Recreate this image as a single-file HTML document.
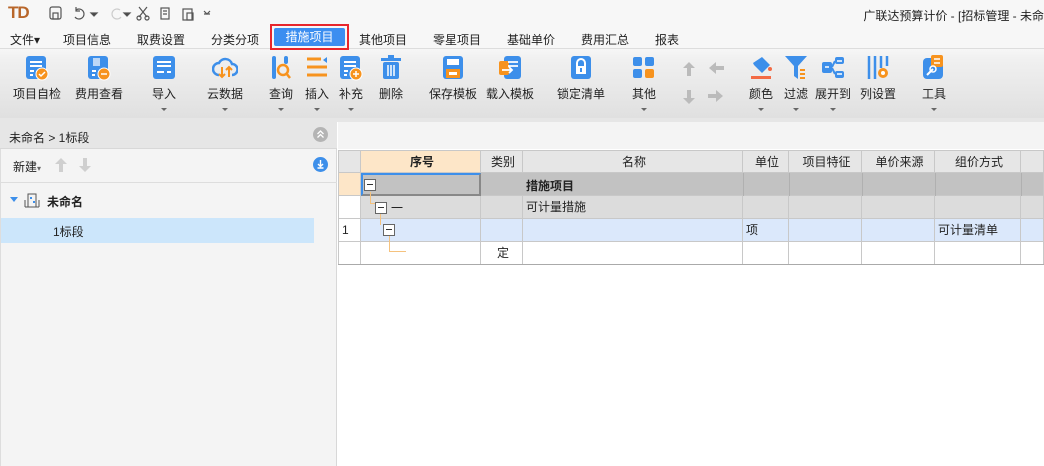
<!DOCTYPE html>
<html><head><meta charset="utf-8"><style>
*{margin:0;padding:0;box-sizing:border-box}
body{width:1044px;height:466px;overflow:hidden;position:relative;background:#fff;font-family:"Liberation Sans","Noto Sans CJK SC",sans-serif;font-size:12px;color:#222}
.a{position:absolute;white-space:nowrap}
.tb{position:absolute;top:0;width:1044px;height:118px;background:linear-gradient(#f7f7f7 0,#f7f7f7 48px,#f0f0f0 60px,#e0e0e0 118px)}
.menu span{position:absolute;top:31px;font-size:12px}
.it{position:absolute;top:55px;width:64px;text-align:center;font-size:12px;white-space:nowrap}
.it svg{display:block;margin:0 auto 4px}
.car{display:block;margin:6px auto 0;width:0;height:0;border-left:3px solid transparent;border-right:3px solid transparent;border-top:3px solid #666}
.g{position:absolute;left:338px;top:150px;width:706px}
.c{position:absolute;border-right:1px solid #c8c8c8;border-bottom:1px solid #c8c8c8;height:23px;line-height:22px;font-size:12px;padding-left:3px;white-space:nowrap}
.box{position:absolute;width:12px;height:12px;border:1px solid #666;background:#fff}
.box:after{content:"";position:absolute;left:2px;top:4px;width:6px;height:1px;background:#333}
</style></head><body>
<div class="tb"></div>
<div class="a" style="left:8px;top:3px;font:bold 17px 'Liberation Sans';color:#b8662a;letter-spacing:-1px">TD</div>
<svg class="a" style="left:48px;top:5px" width="170" height="16" fill="none" stroke="#555" stroke-width="1.2">
<rect x="2" y="2" width="11" height="12" rx="2"/><rect x="5" y="8" width="5" height="6"/>
<path d="M28 5a5 5 0 1 1-1 7M28 2v4h4"/><path d="M43 8l3 3 3-3z" fill="#444"/>
<path d="M72 5a5 5 0 1 0 1 7" stroke="#ccc"/><path d="M76 8l3 3 3-3z" fill="#444"/>
<path d="M91 2l8 10M99 2l-8 10"/><circle cx="91" cy="13" r="2"/><circle cx="99" cy="13" r="2"/>
<rect x="113" y="3" width="8" height="11"/><path d="M115 6h4M115 9h4"/>
<rect x="135" y="4" width="9" height="11"/><rect x="139" y="8" width="6" height="7"/>
<path d="M156 6l3 3 3-3M156 9h6"/>
</svg>
<div class="a" style="right:0;top:7px;font-size:12px">广联达预算计价 - [招标管理 - 未命</div>
<div class="menu">
<span style="left:10px">文件▾</span><span style="left:63px">项目信息</span><span style="left:137px">取费设置</span><span style="left:211px">分类分项</span>
<span style="left:359px">其他项目</span><span style="left:433px">零星项目</span><span style="left:507px">基础单价</span><span style="left:581px">费用汇总</span><span style="left:655px">报表</span>
</div>
<div class="a" style="left:0;top:48px;width:1044px;height:1px;background:#ddd"></div>
<div class="a" style="left:270px;top:24px;width:79px;height:26px;border:2px solid #e8262c"></div>
<div class="a" style="left:274px;top:28px;width:71px;height:18px;background:#3c8ef0;border-radius:2px;color:#fff;text-align:center;line-height:18px">措施项目</div>

<div class="it" style="left:5px"><svg width="24" height="26"><rect x="1" y="1" width="20" height="23" rx="3" fill="#3d8fea"/><path d="M5 7h12M5 11h12M5 16h4M5 20h3" stroke="#fff" stroke-width="2"/><circle cx="17" cy="19" r="6" fill="#f7931e" stroke="#fff"/><path d="M14 19l2 2 4-4" stroke="#fff" stroke-width="1.5" fill="none"/></svg>项目自检</div>
<div class="it" style="left:67px"><svg width="24" height="26"><rect x="1" y="1" width="20" height="23" rx="3" fill="#3d8fea"/><rect x="6" y="3" width="7" height="8" fill="#bcd7f7"/><path d="M5 16h4M5 20h3" stroke="#fff" stroke-width="2"/><circle cx="17" cy="19" r="6" fill="#f7931e" stroke="#fff"/><path d="M14 19h6" stroke="#fff" stroke-width="1.5"/></svg>费用查看</div>
<div class="it" style="left:132px"><svg width="24" height="26"><rect x="1" y="1" width="22" height="23" rx="3" fill="#3d8fea"/><path d="M5 7h14M5 11h14M5 17h7M15 17h4" stroke="#fff" stroke-width="2"/></svg>导入<i class="car"></i></div>
<div class="it" style="left:193px"><svg width="26" height="26"><path d="M7 20a6 6 0 0 1 0-12a7 7 0 0 1 13 1a5 5 0 0 1 0 11" fill="none" stroke="#3d8fea" stroke-width="2.5"/><path d="M10 12v10M7 19l3 3 3-3M17 22v-10M14 15l3-3 3 3" stroke="#f7931e" stroke-width="2" fill="none"/></svg>云数据<i class="car"></i></div>
<div class="it" style="left:249px"><svg width="24" height="26"><rect x="3" y="1" width="4" height="23" rx="2" fill="#3d8fea"/><rect x="15" y="1" width="4" height="8" rx="2" fill="#3d8fea"/><circle cx="14" cy="15" r="5" fill="none" stroke="#f7931e" stroke-width="2.5"/><path d="M17 18l4 5" stroke="#f7931e" stroke-width="2.5"/></svg>查询<i class="car"></i></div>
<div class="it" style="left:285px"><svg width="24" height="26"><path d="M2 4h14M2 12h20M2 20h20" stroke="#f7931e" stroke-width="3"/><path d="M22 2v6l-4-3z" fill="#3d8fea"/></svg>插入<i class="car"></i></div>
<div class="it" style="left:319px"><svg width="24" height="26"><rect x="1" y="1" width="20" height="23" rx="3" fill="#3d8fea"/><path d="M5 7h12M5 11h12M5 16h4M5 20h3" stroke="#fff" stroke-width="2"/><circle cx="17" cy="19" r="6" fill="#f7931e" stroke="#fff"/><path d="M14 19h6M17 16v6" stroke="#fff" stroke-width="1.5"/></svg>补充<i class="car"></i></div>
<div class="it" style="left:359px"><svg width="24" height="26"><rect x="2" y="3" width="20" height="3" fill="#3d8fea"/><rect x="9" y="0" width="6" height="3" fill="#3d8fea"/><rect x="4" y="7" width="16" height="17" rx="2" fill="#3d8fea"/><path d="M9 10v11M12 10v11M15 10v11" stroke="#fff" stroke-width="1.5"/></svg>删除</div>
<div class="it" style="left:421px"><svg width="24" height="26"><rect x="2" y="1" width="20" height="23" rx="3" fill="#3d8fea"/><rect x="6" y="4" width="12" height="6" fill="#fff"/><rect x="5" y="14" width="14" height="9" fill="#f7931e"/><rect x="8" y="17" width="8" height="3" fill="#fff"/></svg>保存模板</div>
<div class="it" style="left:478px"><svg width="24" height="26"><rect x="6" y="1" width="17" height="23" rx="3" fill="#3d8fea"/><rect x="1" y="6" width="10" height="14" rx="2" fill="#f7931e"/><path d="M10 7h10M10 11h10M4 15h10M11 12l3 3-3 3" stroke="#fff" stroke-width="1.8" fill="none"/></svg>载入模板</div>
<div class="it" style="left:549px"><svg width="24" height="26"><rect x="2" y="1" width="20" height="23" rx="3" fill="#3d8fea"/><path d="M8 12v-4a4 4 0 0 1 8 0v4" stroke="#fff" stroke-width="2" fill="none"/><rect x="7" y="11" width="10" height="8" fill="#fff"/><rect x="11" y="13" width="2" height="4" fill="#3d8fea"/></svg>锁定清单</div>
<div class="it" style="left:612px"><svg width="24" height="26"><rect x="1" y="2" width="9" height="9" rx="2" fill="#3d8fea"/><rect x="13" y="2" width="9" height="9" rx="2" fill="#3d8fea"/><rect x="1" y="14" width="9" height="9" rx="2" fill="#3d8fea"/><rect x="13" y="14" width="9" height="9" rx="2" fill="#f7931e"/></svg>其他<i class="car"></i></div>
<svg class="a" style="left:680px;top:60px" width="46" height="46" fill="#bbb"><path d="M9 2l6 6h-4v8h-4v-8h-4z"/><path d="M29 8l7-6v4h8v4h-8v4z"/><path d="M9 44l6-6h-4v-8h-4v8h-4z"/><path d="M43 36l-7-6v4h-8v4h8v4z"/></svg>
<div class="it" style="left:729px"><svg width="24" height="26"><path d="M4 8l9-6 8 8-8 8-8-8z" fill="#3d8fea"/><rect x="2" y="21" width="20" height="3" fill="#f36b45"/><circle cx="21" cy="14" r="2" fill="#f36b45"/></svg>颜色<i class="car"></i></div>
<div class="it" style="left:764px"><svg width="24" height="26"><path d="M1 1h22l-9 10v13l-4-3v-10z" fill="#3d8fea"/><path d="M16 15h5M16 19h5M16 23h5" stroke="#f7931e" stroke-width="2"/></svg>过滤<i class="car"></i></div>
<div class="it" style="left:801px"><svg width="24" height="26"><rect x="1" y="7" width="10" height="11" rx="2" fill="#3d8fea"/><rect x="14" y="2" width="9" height="7" rx="2" fill="#3d8fea"/><rect x="14" y="16" width="9" height="7" rx="2" fill="#3d8fea"/><path d="M11 12l3-6M11 13l3 6" stroke="#3d8fea" stroke-width="2"/><path d="M4 12h4M16 6h5M16 19h5" stroke="#fff" stroke-width="1.5"/></svg>展开到<i class="car"></i></div>
<div class="it" style="left:846px"><svg width="24" height="26"><path d="M3 1v23M9 1v23M15 1v12M21 1v10" stroke="#3d8fea" stroke-width="2.5"/><circle cx="17" cy="18" r="5" fill="#f7931e"/><circle cx="17" cy="18" r="2" fill="#fff"/></svg>列设置</div>
<div class="it" style="left:902px"><svg width="24" height="26"><rect x="1" y="3" width="20" height="21" rx="4" fill="#3d8fea"/><rect x="9" y="0" width="12" height="12" rx="2" fill="#f7931e"/><path d="M12 4h6M12 8h6" stroke="#fff" stroke-width="1.5"/><path d="M5 20l6-6" stroke="#fff" stroke-width="2"/><circle cx="11" cy="14" r="3" fill="none" stroke="#fff" stroke-width="1.5"/></svg>工具<i class="car"></i></div>

<div class="a" style="left:0;top:118px;width:1044px;height:4px;background:#e6e6e6"></div>
<div class="a" style="left:0;top:122px;width:337px;height:344px;background:#f4f4f4;border-left:1px solid #ddd;border-right:1px solid #d8d8d8"></div>
<div class="a" style="left:0;top:122px;width:337px;height:27px;background:#e6e6e6;border-bottom:1px solid #d8d8d8"></div>
<div class="a" style="left:9px;top:129px">未命名 &gt; 1标段</div>
<div class="a" style="left:313px;top:127px;width:15px;height:15px;border-radius:50%;background:#b4b4b4"></div>
<svg class="a" style="left:313px;top:127px" width="15" height="15" stroke="#fff" fill="none" stroke-width="1.3"><path d="M4.5 7l3-3 3 3M4.5 10.5l3-3 3 3"/></svg>
<div class="a" style="left:13px;top:158px">新建<span style="font-size:8px;color:#666">▾</span></div>
<svg class="a" style="left:54px;top:157px" width="40" height="16" fill="#cfcfcf"><path d="M7 1l6 6h-4v8h-4v-8h-4z"/><path d="M31 15l6-6h-4v-8h-4v8h-4z"/></svg>
<div class="a" style="left:313px;top:157px;width:15px;height:15px;border-radius:50%;background:#3d8fea"></div>
<svg class="a" style="left:313px;top:157px" width="15" height="15" stroke="#fff" fill="none" stroke-width="1.4"><path d="M7.5 3v6M5 7l2.5 2.5 2.5-2.5M4.5 11h6"/></svg>
<div class="a" style="left:1px;top:182px;width:336px;height:1px;background:#ddd"></div>
<div class="a" style="left:10px;top:197px;width:0;height:0;border-left:4px solid transparent;border-right:4px solid transparent;border-top:5px solid #3d8fea"></div>
<svg class="a" style="left:24px;top:192px" width="16" height="16" fill="none" stroke="#555"><rect x="4" y="2" width="8" height="13"/><path d="M1 15h14M1 8v7M15 8v7"/><rect x="6" y="5" width="2" height="2" fill="#3d8fea" stroke="none"/><rect x="9" y="9" width="2" height="2" fill="#3d8fea" stroke="none"/></svg>
<div class="a" style="left:47px;top:193px;font-weight:bold">未命名</div>
<div class="a" style="left:1px;top:218px;width:313px;height:25px;background:#cce6fb"></div>
<div class="a" style="left:53px;top:223px">1标段</div>

<div class="a" style="left:338px;top:122px;width:706px;height:27px;background:#f4f4f4"></div>
<div class="g">
<div class="c" style="left:0;top:0;width:23px;background:#e6e6e6;border-left:1px solid #c8c8c8;border-top:1px solid #c8c8c8"></div>
<div class="c" style="left:23px;top:0;width:120px;background:#fde6c8;border-top:1px solid #c8c8c8;text-align:center;font-weight:bold">序号</div>
<div class="c" style="left:143px;top:0;width:42px;background:#e6e6e6;border-top:1px solid #c8c8c8;text-align:center">类别</div>
<div class="c" style="left:185px;top:0;width:220px;background:#e6e6e6;border-top:1px solid #c8c8c8;text-align:center">名称</div>
<div class="c" style="left:405px;top:0;width:46px;background:#e6e6e6;border-top:1px solid #c8c8c8;text-align:center">单位</div>
<div class="c" style="left:451px;top:0;width:73px;background:#e6e6e6;border-top:1px solid #c8c8c8;text-align:center">项目特征</div>
<div class="c" style="left:524px;top:0;width:73px;background:#e6e6e6;border-top:1px solid #c8c8c8;text-align:center">单价来源</div>
<div class="c" style="left:597px;top:0;width:86px;background:#e6e6e6;border-top:1px solid #c8c8c8;text-align:center">组价方式</div>
<div class="c" style="left:683px;top:0;width:23px;background:#e6e6e6;border-top:1px solid #c8c8c8"></div>
<div class="c" style="left:0;top:23px;width:23px;background:#fde6c8;border-left:1px solid #c8c8c8"></div>
<div class="c" style="left:143px;top:23px;width:563px;background:#c2c2c2"></div>
<div class="c" style="left:23px;top:23px;width:120px;background:#c2c2c2;border:2px solid #888;border-left-color:#3d8fea;border-top-color:#3d8fea"></div>
<div class="a" style="left:188px;top:27px;font-weight:bold">措施项目</div>
<div class="a" style="left:405px;top:23px;width:1px;height:23px;background:#b0b0b0"></div><div class="a" style="left:451px;top:23px;width:1px;height:23px;background:#b0b0b0"></div><div class="a" style="left:524px;top:23px;width:1px;height:23px;background:#b0b0b0"></div><div class="a" style="left:597px;top:23px;width:1px;height:23px;background:#b0b0b0"></div><div class="a" style="left:683px;top:23px;width:1px;height:23px;background:#b0b0b0"></div>
<div class="box" style="left:26px;top:29px"></div>
<div class="c" style="left:0;top:46px;width:23px;background:#fff;border-left:1px solid #c8c8c8"></div>
<div class="c" style="left:23px;top:46px;width:120px;background:#dcdcdc"></div>
<div class="c" style="left:143px;top:46px;width:42px;background:#dcdcdc"></div>
<div class="c" style="left:185px;top:46px;width:220px;background:#dcdcdc">可计量措施</div>
<div class="c" style="left:405px;top:46px;width:46px;background:#dcdcdc"></div>
<div class="c" style="left:451px;top:46px;width:73px;background:#dcdcdc"></div>
<div class="c" style="left:524px;top:46px;width:73px;background:#dcdcdc"></div>
<div class="c" style="left:597px;top:46px;width:86px;background:#dcdcdc"></div>
<div class="c" style="left:683px;top:46px;width:23px;background:#dcdcdc"></div>
<div class="a" style="left:32px;top:42px;width:1px;height:11px;background:#f5c27e"></div>
<div class="a" style="left:32px;top:53px;width:5px;height:1px;background:#f5c27e"></div>
<div class="box" style="left:37px;top:52px"></div>
<div class="a" style="left:53px;top:49px">一</div>
<div class="c" style="left:0;top:69px;width:23px;background:#fff;border-left:1px solid #c8c8c8">1</div>
<div class="c" style="left:23px;top:69px;width:120px;background:#dbe8fb"></div>
<div class="c" style="left:143px;top:69px;width:42px;background:#dbe8fb"></div>
<div class="c" style="left:185px;top:69px;width:220px;background:#dbe8fb"></div>
<div class="c" style="left:405px;top:69px;width:46px;background:#dbe8fb">项</div>
<div class="c" style="left:451px;top:69px;width:73px;background:#dbe8fb"></div>
<div class="c" style="left:524px;top:69px;width:73px;background:#dbe8fb"></div>
<div class="c" style="left:597px;top:69px;width:86px;background:#dbe8fb">可计量清单</div>
<div class="c" style="left:683px;top:69px;width:23px;background:#dbe8fb"></div>
<div class="a" style="left:42px;top:64px;width:1px;height:11px;background:#f5c27e"></div>
<div class="box" style="left:45px;top:74px"></div>
<div class="c" style="left:0;top:92px;width:23px;border-left:1px solid #c8c8c8"></div>
<div class="c" style="left:23px;top:92px;width:120px"></div>
<div class="c" style="left:143px;top:92px;width:42px;text-align:center">定</div>
<div class="c" style="left:185px;top:92px;width:220px"></div>
<div class="c" style="left:405px;top:92px;width:46px"></div>
<div class="c" style="left:451px;top:92px;width:73px"></div>
<div class="c" style="left:524px;top:92px;width:73px"></div>
<div class="c" style="left:597px;top:92px;width:86px"></div>
<div class="c" style="left:683px;top:92px;width:23px"></div>
<div class="a" style="left:51px;top:86px;width:1px;height:15px;background:#f5c27e"></div>
<div class="a" style="left:51px;top:101px;width:17px;height:1px;background:#f5c27e"></div>
<div class="a" style="left:0;top:114px;width:706px;height:1px;background:#aaa"></div>
</div>
</body></html>
